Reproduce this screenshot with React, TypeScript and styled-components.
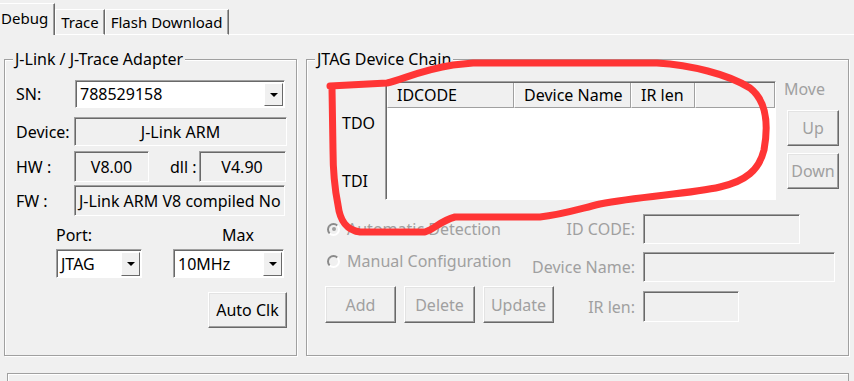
import React from 'react'
import styled, { createGlobalStyle, css } from 'styled-components'

const GlobalStyle = createGlobalStyle`
  html, body {
    margin: 0;
    padding: 0;
    background: #f0f0f0;
    overflow: hidden;
  }
  body {
    font-family: "Noto Sans", "Noto Sans CJK SC", sans-serif;
    font-size: 16px;
    color: #000;
  }
`

const Page = styled.div`
  position: relative;
  width: 854px;
  height: 381px;
  overflow: hidden;
  background: #f0f0f0;
`

const TabStrip = styled.div`
  display: flex;
  align-items: flex-end;
  height: 35px;
  margin-left: -6px;
  font-size: 15px;
`

const Tab = styled.div<{ $active?: boolean }>`
  height: ${(p) => (p.$active ? 32 : 26)}px;
  padding: 0 ${(p) => (p.$active ? 6 : 5)}px;
  display: flex;
  align-items: center;
  box-sizing: border-box;
  border-left: 1px solid #fff;
  border-top: 1px solid #fff;
  border-right: 1px solid #696969;
  box-shadow: inset -1px 0 #a0a0a0;
  ${(p) => !p.$active && css`border-bottom: 1px solid #fff;`}
  ${(p) => p.$active && css`padding-bottom: 3px;`}
`

const TabFill = styled.div`
  flex: 1;
  border-bottom: 1px solid #fff;
`

const Body = styled.div`
  display: flex;
  gap: 9px;
  padding: 24px 0 0 4px;
`

const Group = styled.div<{ $w: number; $pad: string }>`
  position: relative;
  width: ${(p) => p.$w}px;
  height: 297px;
  box-sizing: border-box;
  border: 1px solid #a0a0a0;
  box-shadow: 1px 1px 0 #fff, inset 1px 1px 0 #fff;
  padding: ${(p) => p.$pad};
`

const Legend = styled.span`
  position: absolute;
  top: -11px;
  left: 8px;
  padding: 0 2px;
  background: #f0f0f0;
  line-height: 20px;
`

const FormGrid = styled.div`
  display: grid;
  grid-template-columns: 58px 1fr;
  align-items: center;
`

const Label = styled.span<{ $disabled?: boolean; $mt?: number }>`
  white-space: nowrap;
  color: ${(p) => (p.$disabled ? '#a0a0a0' : '#000')};
  margin-top: ${(p) => p.$mt ?? 0}px;
`

const Sunken = styled.div<{ $w?: number; $h: number; $mt?: number; $align?: string; $bg?: string }>`
  box-sizing: border-box;
  flex-shrink: 0;
  height: ${(p) => p.$h}px;
  width: ${(p) => (p.$w ? `${p.$w}px` : 'auto')};
  margin-top: ${(p) => p.$mt ?? 0}px;
  border: 1px solid;
  border-color: #a0a0a0 #fff #fff #a0a0a0;
  box-shadow: inset 1px 1px 0 #696969;
  background: ${(p) => p.$bg ?? '#f0f0f0'};
  display: flex;
  align-items: center;
  justify-content: ${(p) => p.$align ?? 'center'};
  padding: 0 4px;
  white-space: nowrap;
  overflow: hidden;
`

const ComboBox = styled(Sunken)`
  padding: 0 0 0 4px;
  justify-content: space-between;
`

const ComboArrow = styled.span`
  width: 19px;
  align-self: stretch;
  margin: 2px 1px 1px 0;
  box-sizing: border-box;
  border: 1px solid;
  border-color: #fff #696969 #696969 #fff;
  background: #f0f0f0;
  display: flex;
  align-items: center;
  justify-content: center;
  &::after {
    content: '';
    border-left: 4px solid transparent;
    border-right: 4px solid transparent;
    border-top: 4px solid #000;
  }
`

const Row = styled.div<{ $mt?: number; $gap?: number }>`
  display: flex;
  align-items: center;
  gap: ${(p) => p.$gap ?? 0}px;
  margin-top: ${(p) => p.$mt ?? 0}px;
`

const Column = styled.div<{ $w: number; $labelPad?: number }>`
  display: flex;
  flex-direction: column;
  width: ${(p) => p.$w}px;
  & > span {
    padding-left: ${(p) => p.$labelPad ?? 0}px;
    line-height: 18px;
    margin-bottom: 5px;
  }
`

const Button = styled.div<{ $w: number; $h: number; $disabled?: boolean }>`
  box-sizing: border-box;
  flex-shrink: 0;
  width: ${(p) => p.$w}px;
  height: ${(p) => p.$h}px;
  border: 1px solid;
  border-color: #fff #696969 #696969 #fff;
  box-shadow: inset -1px -1px 0 #a0a0a0, inset 1px 1px 0 #e3e3e3;
  display: flex;
  align-items: center;
  justify-content: center;
  color: ${(p) => (p.$disabled ? '#a0a0a0' : '#000')};
`

const ChainArea = styled.div`
  display: flex;
  align-items: flex-start;
`

const PinLabels = styled.div`
  width: 55px;
  height: 119px;
  display: flex;
  flex-direction: column;
  justify-content: space-between;
  padding: 31px 0 8px 12px;
  box-sizing: border-box;
`

const Table = styled.div`
  width: 391px;
  height: 119px;
  box-sizing: border-box;
  border: 1px solid;
  border-color: #a0a0a0 #fff #fff #a0a0a0;
  box-shadow: inset 1px 1px 0 #696969;
  background: #fff;
  display: flex;
  flex-direction: column;
  padding: 1px 0 0 1px;
`

const HeaderRow = styled.div`
  display: flex;
  height: 25px;
  background: #f0f0f0;
`

const HeaderCell = styled.div<{ $w?: number }>`
  box-sizing: border-box;
  width: ${(p) => (p.$w ? `${p.$w}px` : 'auto')};
  flex: ${(p) => (p.$w ? 'none' : 1)};
  border-left: 1px solid #fff;
  border-right: 1px solid #a0a0a0;
  border-bottom: 1px solid #a0a0a0;
  display: flex;
  align-items: center;
  padding-left: 9px;
  white-space: nowrap;
`

const SideButtons = styled.div`
  display: flex;
  flex-direction: column;
  gap: 7px;
  margin-left: 11px;
  & > span {
    margin: -1px 0 5px -3px;
    line-height: 18px;
  }
`

const Lower = styled.div`
  display: flex;
  margin-top: 13px;
`

const LeftCol = styled.div`
  width: 210px;
  display: flex;
  flex-direction: column;
  margin-left: -5px;
`

const RadioRow = styled.div`
  height: 32px;
  display: flex;
  align-items: center;
  gap: 7px;
  color: #a0a0a0;
  white-space: nowrap;
`

const Radio = styled.span<{ $checked?: boolean }>`
  width: 13px;
  height: 13px;
  margin-left: 2px;
  box-sizing: border-box;
  border-radius: 50%;
  border: 2px solid;
  border-color: #8a8a8a #fff #fff #8a8a8a;
  background: #f0f0f0;
  display: flex;
  align-items: center;
  justify-content: center;
  &::after {
    content: '';
    width: 4px;
    height: 4px;
    border-radius: 50%;
    background: ${(p) => (p.$checked ? '#a0a0a0' : 'transparent')};
  }
`

const FieldGrid = styled.div`
  display: grid;
  grid-template-columns: 100px auto;
  column-gap: 8px;
  row-gap: 7px;
  align-items: center;
  & > span {
    justify-self: end;
    color: #a0a0a0;
    white-space: nowrap;
  }
`

const Footer = styled.div`
  margin: 17px 5px 0 7px;
  height: 20px;
  border: 1px solid #a0a0a0;
  border-bottom: none;
  box-shadow: inset 1px 1px 0 #fff;
`

const Scribble = styled.svg`
  position: absolute;
  left: 0;
  top: 0;
  pointer-events: none;
`

export default function App() {
  return (
    <Page>
      <GlobalStyle />
      <TabStrip>
        <Tab $active>Debug</Tab>
        <Tab>Trace</Tab>
        <Tab>Flash Download</Tab>
        <TabFill />
      </TabStrip>
      <Body>
        <Group $w={293} $pad="20px 9px 0 11px">
          <Legend>J-Link / J-Trace Adapter</Legend>
          <FormGrid>
            <Label>SN:</Label>
            <ComboBox $h={28} $w={210} $bg="#fff" style={{ marginLeft: 1 }}>
              788529158
              <ComboArrow />
            </ComboBox>
            <Label $mt={9}>Device:</Label>
            <Sunken $h={29} $mt={9}>J-Link ARM</Sunken>
            <Label $mt={5}>HW :</Label>
            <Row $mt={5}>
              <Sunken $h={31} $w={75}>V8.00</Sunken>
              <Label style={{ margin: '0 2px 0 21px' }}>dll :</Label>
              <Sunken $h={31} $w={87}>V4.90</Sunken>
            </Row>
            <Label $mt={3}>FW :</Label>
            <Sunken $h={31} $mt={3} $align="flex-start" style={{ marginRight: 2 }}>
              J-Link ARM V8 compiled No
            </Sunken>
          </FormGrid>
          <Row $mt={10} $gap={31} style={{ paddingLeft: 40 }}>
            <Column $w={86}>
              <span>Port:</span>
              <ComboBox $h={29} $bg="#fff">
                JTAG
                <ComboArrow />
              </ComboBox>
            </Column>
            <Column $w={111} $labelPad={49}>
              <span>Max</span>
              <ComboBox $h={29} $bg="#fff">
                10MHz
                <ComboArrow />
              </ComboBox>
            </Column>
          </Row>
          <Row $mt={14} style={{ justifyContent: 'flex-end' }}>
            <Button $w={79} $h={36}>Auto Clk</Button>
          </Row>
        </Group>
        <Group $w={543} $pad="21px 0 0 23px">
          <Legend>JTAG Device Chain</Legend>
          <ChainArea>
            <PinLabels>
              <span>TDO</span>
              <span>TDI</span>
            </PinLabels>
            <Table>
              <HeaderRow>
                <HeaderCell $w={127}>IDCODE</HeaderCell>
                <HeaderCell $w={117}>Device Name</HeaderCell>
                <HeaderCell $w={64}>IR len</HeaderCell>
                <HeaderCell />
              </HeaderRow>
            </Table>
            <SideButtons>
              <Label $disabled>Move</Label>
              <Button $w={52} $h={36} $disabled>Up</Button>
              <Button $w={52} $h={36} $disabled>Down</Button>
            </SideButtons>
          </ChainArea>
          <Lower>
            <LeftCol>
              <RadioRow>
                <Radio $checked />
                Automatic Detection
              </RadioRow>
              <RadioRow>
                <Radio />
                Manual Configuration
              </RadioRow>
              <Row $mt={9} $gap={8}>
                <Button $w={71} $h={37} $disabled>Add</Button>
                <Button $w={71} $h={37} $disabled>Delete</Button>
                <Button $w={71} $h={37} $disabled>Update</Button>
              </Row>
            </LeftCol>
            <FieldGrid>
              <span>ID CODE:</span>
              <Sunken $h={30} $w={157} />
              <span>Device Name:</span>
              <Sunken $h={30} $w={192} />
              <span>IR len:</span>
              <Sunken $h={31} $w={96} />
            </FieldGrid>
          </Lower>
        </Group>
      </Body>
      <Footer />
      <Scribble width="854" height="381" viewBox="0 0 854 381">
        <path
          d="M330,86 L387,83 C402,80 420,70 453,65 L473,63 L657,63 C690,65 728,74 750,88 C768,102 768,128 764,150 C759,170 746,181 720,187 C690,194 640,196 600,204 C572,211 560,215 540,217 L455,217 C440,221 435,229 425,232 L360,232 C346,230 340,221 338,205 C335,190 333,170 333,150 L332,88"
          fill="none"
          stroke="#ff3535"
          strokeWidth="7"
          strokeLinecap="round"
          strokeLinejoin="round"
        />
      </Scribble>
    </Page>
  )
}
